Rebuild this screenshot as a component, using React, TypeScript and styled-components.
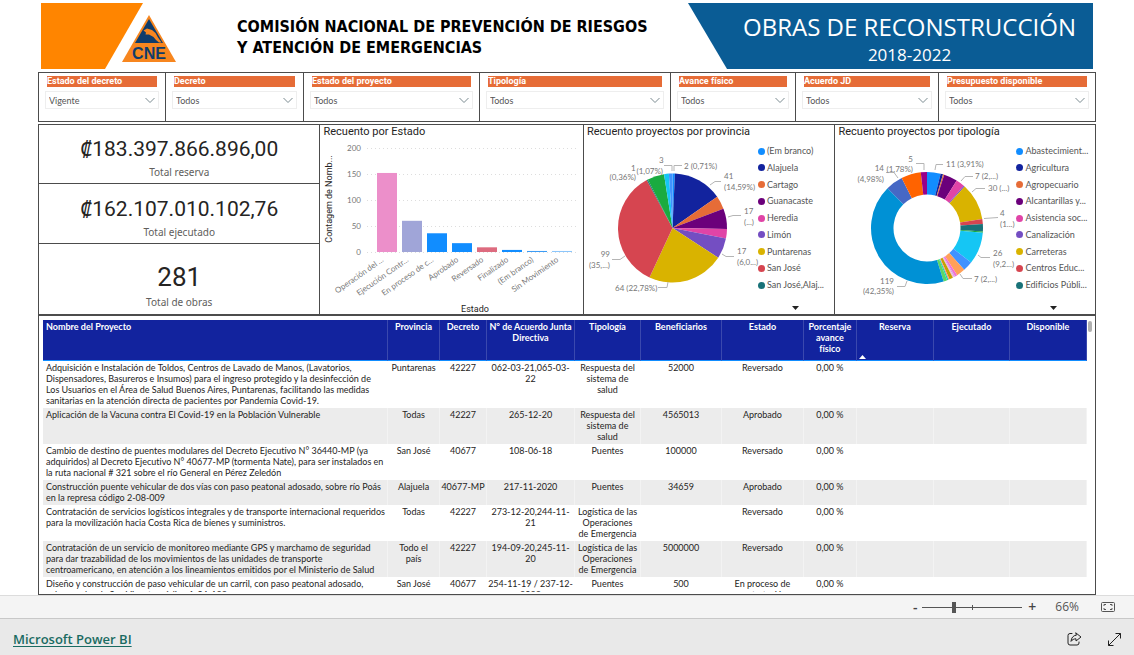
import React from 'react';
import styled, { createGlobalStyle } from 'styled-components';

const text = 'Lato, "Noto Sans", sans-serif';
const din = 'Roboto, "Noto Sans", sans-serif';
const ui = '"Open Sans", "Noto Sans", sans-serif';
const line = '#4c4c4c';

const GlobalStyle = createGlobalStyle`
  * { box-sizing: border-box; }
  body { margin: 0; background: #fff; color: #252423; font-family: ${text}; font-feature-settings: "liga" 0, "calt" 0, "ordn" 0; }
  button, select, input { font-family: inherit; }
`;

const Page = styled.div`
  min-height: 100vh;
  display: flex;
  flex-direction: column;
`;

const Report = styled.main`
  flex: 1;
  display: flex;
  flex-direction: column;
  padding: 0 38px;
`;

/* ---------- header ---------- */

const Header = styled.header`
  display: flex;
  align-items: flex-start;
  padding: 3px;
`;

const OrangeShape = styled.div`
  width: 102px;
  height: 66px;
  background: #ff8500;
  clip-path: polygon(0 0, 100% 0, 64px 100%, 0 100%);
`;

const Logo = styled.svg`
  width: 54px;
  height: 48px;
  margin: 12px 0 0 -21px;
`;

const Title = styled.h1`
  margin: 13px 0 0 61px;
  font: bold 16px/21px "DejaVu Sans Condensed", "DejaVu Sans", sans-serif;
  color: #000;
`;

const Banner = styled.div`
  margin-left: auto;
  width: 405px;
  height: 66px;
  padding: 7px 0 0 38px;
  background: #0a5c95;
  color: #fff;
  text-align: center;
  font-family: ${ui};
  clip-path: polygon(0 0, 100% 0, 100% 100%, 39px 100%);
`;

const BannerTitle = styled.h2`
  margin: 0;
  font-size: 24px;
  font-weight: 400;
  line-height: 34px;
`;

const BannerYears = styled.p`
  margin: 0;
  font-size: 17px;
  line-height: 22px;
`;

/* ---------- slicers ---------- */

const Slicers = styled.section`
  display: grid;
  grid-template-columns: 127fr 138fr 176fr 191fr 125fr 143fr 157fr;
  height: 50px;
  border: 1px solid ${line};
  border-left: 0;
`;

const Slicer = styled.div`
  padding: 3px 6px 0;
  border-left: 1px solid ${line};
`;

const SlicerLabel = styled.label`
  display: block;
  margin: 0 2px 4px;
  background: #e66c37;
  color: #fff;
  font: bold 9px/11px ${din};
`;

const SelectBox = styled.div`
  position: relative;
`;

const Select = styled.select`
  appearance: none;
  display: block;
  width: 100%;
  height: 18px;
  padding: 0 16px 0 3px;
  border: 1px solid #eee;
  border-radius: 0;
  background: #fff;
  color: #555;
  font-size: 9px;
`;

const Chevron = styled.svg`
  position: absolute;
  right: 4px;
  top: 6px;
  width: 10px;
  height: 7px;
  pointer-events: none;
`;

/* ---------- panels ---------- */

const Panels = styled.section`
  display: grid;
  grid-template-columns: 281fr 264fr 252fr 261fr;
  margin-top: 2px;
  height: 192px;
  border: 1px solid ${line};
  border-bottom-width: 2px;
`;

const Kpis = styled.div`
  display: grid;
  grid-template-rows: 59px 60px 1fr;
`;

const Kpi = styled.div`
  display: flex;
  flex-direction: column;
  align-items: center;
  justify-content: center;
  padding-top: 8px;
  border-bottom: 1px solid ${line};
  &:last-child { border-bottom: 0; padding-top: 13px; }
`;

const KpiValue = styled.div<{ $large?: boolean }>`
  font: 400 ${(p) => (p.$large ? 26 : 21)}px/${(p) => (p.$large ? 32 : 28)}px ${din};
  color: #252423;
`;

const KpiLabel = styled.div`
  font: 10px/18px "Noto Sans", sans-serif;
  color: #605e5c;
`;

const Panel = styled.div`
  border-left: 1px solid ${line};
  padding: 1px 3px 0;
  overflow: hidden;
`;

const PanelTitle = styled.h3`
  margin: 0;
  font: 400 11px/12px ${din};
  white-space: nowrap;
`;

const ChartRow = styled.div`
  display: flex;
  margin-left: -1px;
`;

const Chart = styled.svg`
  display: block;
  flex: none;
  overflow: visible;
  font-family: ${text};
  font-size: 8px;
  fill: #777;
`;

const Legend = styled.div`
  flex: 1;
  display: flex;
  flex-direction: column;
  align-items: flex-start;
  padding-top: 7px;
`;

const LegendList = styled.ul`
  display: flex;
  flex-direction: column;
  justify-content: space-between;
  height: 146px;
  margin: 0;
  padding: 0;
  list-style: none;
`;

const LegendItem = styled.li<{ $color: string }>`
  display: flex;
  align-items: center;
  gap: 2px;
  font-size: 9px;
  line-height: 12px;
  color: #555;
  white-space: nowrap;
  &::before {
    content: '';
    width: 7px;
    height: 7px;
    border-radius: 50%;
    background: ${(p) => p.$color};
  }
`;

const MoreButton = styled.button`
  margin: 14px 0 0 34px;
  padding: 0;
  border: 0;
  background: none;
  line-height: 0;
`;

/* ---------- table ---------- */

const TablePanel = styled.section`
  display: flex;
  align-items: flex-start;
  padding: 4px 3px 2px 4px;
  border: 1px solid ${line};
  border-top: 0;
`;

const TableView = styled.div`
  flex: 1;
  height: 272px;
  overflow: hidden;
`;

const Table = styled.table`
  width: 100%;
  table-layout: fixed;
  border-collapse: separate;
  border-spacing: 0;
  font-size: 9px;
  line-height: 11px;
`;

const Th = styled.th<{ $left?: boolean }>`
  position: relative;
  height: 41px;
  padding: 1px ${(p) => (p.$left ? 3 : 1)}px 0;
  background: #12239e;
  border-bottom: 1px solid #118dff;
  border-right: 1px solid #3a48ae;
  color: #fff;
  font-weight: 700;
  text-align: ${(p) => (p.$left ? 'left' : 'center')};
  vertical-align: top;
`;

const SortMark = styled.svg`
  position: absolute;
  left: 2px;
  bottom: 1px;
  width: 7px;
  height: 4px;
`;

const Tr = styled.tr`
  &:nth-child(even) { background: #ececec; }
`;

const Td = styled.td<{ $left?: boolean }>`
  padding: 1px ${(p) => (p.$left ? 3 : 0)}px 2px;
  text-align: ${(p) => (p.$left ? 'left' : 'center')};
  vertical-align: top;
  white-space: pre;
  border-right: 1px solid rgba(255, 255, 255, 0.4);
`;

const ScrollThumb = styled.div`
  width: 4px;
  height: 11px;
  margin: 1px 0 0 1px;
  border-radius: 2px;
  background: #b0b0b0;
`;

/* ---------- bottom bars ---------- */

const ZoomBar = styled.div`
  display: flex;
  align-items: center;
  justify-content: flex-end;
  height: 23px;
  padding-right: 18px;
  background: #f4f4f4;
  border-top: 1px solid #dcdcdc;
  font-family: ${ui};
  color: #555;
`;

const ZoomButton = styled.button`
  width: 14px;
  height: 20px;
  padding: 0;
  border: 0;
  background: none;
  color: #444;
  font-size: 14px;
  font-weight: 600;
  line-height: 20px;
`;

const ZoomRange = styled.input`
  appearance: none;
  width: 100px;
  height: 12px;
  margin: 0 3px 0 0;
  background:
    linear-gradient(#555, #555) 50px 4px / 1px 5px no-repeat,
    linear-gradient(#555, #555) 0 6px / 100% 1px no-repeat;
  &::-webkit-slider-thumb {
    appearance: none;
    width: 4px;
    height: 11px;
    background: #555;
  }
`;

const ZoomValue = styled.output`
  margin: 0 22px 0 16px;
  font-size: 12px;
  line-height: 20px;
`;

const IconButton = styled.button`
  display: flex;
  padding: 0;
  border: 0;
  background: none;
  color: inherit;
`;

const Footer = styled.footer`
  display: flex;
  align-items: center;
  gap: 26px;
  height: 37px;
  padding: 4px 13px 0;
  background: #e9e9e9;
  border-top: 1px solid #c8c8c8;
  color: #222;
`;

const FooterLink = styled.a`
  margin-right: auto;
  color: #1a6b62;
  font: 600 13px/20px ${ui};
  text-underline-offset: 2px;
`;

/* ---------- data ---------- */

const slicers = [
  ['Estado del decreto', 'Vigente'],
  ['Decreto', 'Todos'],
  ['Estado del proyecto', 'Todos'],
  ['Tipología', 'Todos'],
  ['Avance físico', 'Todos'],
  ['Acuerdo JD', 'Todos'],
  ['Presupuesto disponible', 'Todos'],
];

const bars: [string, number, string][] = [
  ['Operación del ...', 152, '#ec8fca'],
  ['Ejecución Contr...', 60, '#a0a5d8'],
  ['En proceso de c...', 36, '#118dff'],
  ['Aprobado', 17, '#118dff'],
  ['Reversado', 9, '#dd6b7f'],
  ['Finalizado', 4, '#118dff'],
  ['(Em branco)', 2, '#3c9cf5'],
  ['Sin Movimiento', 2, '#8cc6fb'],
];

type Slice = [number, string];

const provinces: Slice[] = [
  [2, '#118dff'], [41, '#12239e'], [11, '#e66c37'], [17, '#6b007b'], [8, '#e044a7'],
  [17, '#744ec2'], [64, '#d9b300'], [99, '#d64550'], [1, '#197278'], [14, '#1aab40'],
  [4, '#15c6f4'], [3, '#4092ff'],
];

const typologies: Slice[] = [
  [11, '#118dff'], [2, '#12239e'], [1, '#e66c37'], [11, '#6b007b'], [7, '#e044a7'],
  [1, '#744ec2'], [30, '#d9b300'], [4, '#d64550'], [6, '#197278'], [1, '#1aab40'],
  [26, '#15c6f4'], [8, '#4092ff'], [7, '#ffa058'], [2, '#f472d0'], [1, '#c9a0e8'],
  [1, '#f9b0dd'], [3, '#c4a200'], [1, '#ff8f80'], [1, '#00dbbc'], [3, '#5bd667'],
  [119, '#0091d5'], [14, '#4668c5'], [16, '#ff6300'], [5, '#99008a'],
];

const provinceLegend: [string, string][] = [
  ['(Em branco)', '#118dff'], ['Alajuela', '#12239e'], ['Cartago', '#e66c37'],
  ['Guanacaste', '#6b007b'], ['Heredia', '#e044a7'], ['Limón', '#744ec2'],
  ['Puntarenas', '#d9b300'], ['San José', '#d64550'], ['San José,Alaj...', '#197278'],
];

const typologyLegend: [string, string][] = [
  ['Abastecimient...', '#118dff'], ['Agricultura', '#12239e'], ['Agropecuario', '#e66c37'],
  ['Alcantarillas y...', '#6b007b'], ['Asistencia soc...', '#e044a7'], ['Canalización', '#744ec2'],
  ['Carreteras', '#d9b300'], ['Centros Educ...', '#d64550'], ['Edificios Públi...', '#197278'],
];

type Callout = [number, number, string, boolean?];

const provinceCallouts: Callout[] = [
  [73, 25, '3'], [77, 36, '(1,07%)', true], [98, 31, '2 (0,71%)'], [45, 33, '1'],
  [50, 42, '(0,36%)', true], [138, 41, '41'], [138, 52, '(14,59%)'], [158, 76, '17'],
  [158, 87, '(...)'], [151, 116, '17'], [151, 127, '(6,0...)'], [24, 119, '99', true],
  [24, 130, '(35,...)', true], [29, 153, '64 (22,78%)'],
];
const provinceLeaders =
  'M78 27.5H86V33M88 33V27.5H96M124 47L129 43.5H135M142 79L147 77.5H155M136 116L140 118.5H148M26 121.5H34L39 118M72 149.5H81L82 144';

const typologyCallouts: Callout[] = [
  [76, 24, '5', true], [76, 34, '(1,78%)', true], [47, 33, '14', true], [47, 44, '(4,98%)', true],
  [109, 29, '11 (3,91%)'], [138, 41, '7 (2,...)'], [151, 53, '30 (...)'], [163, 78, '4'],
  [163, 89, '(1...)'], [156, 118, '26'], [156, 129, '(9,2...)'], [137, 144, '7 (2,...)'],
  [57, 146, '119', true], [57, 156, '(42,35%)', true],
];
const typologyLeaders =
  'M79 25.5H87V32M49 34.5H57L61 40M98 32L99 26.5H106M124 43L128 38.5H136M135 54L139 50.5H148M147 80.5L161 79.5M141 117L144 119.5H153M123 136L126 140.5H135M60 148.5H68L70 143';

const columns: [string, number][] = [
  ['Nombre del Proyecto', 345], ['Provincia', 52], ['Decreto', 47], ['N° de Acuerdo Junta Directiva', 88],
  ['Tipología', 66], ['Beneficiarios', 81], ['Estado', 82], ['Porcentaje avance físico', 53],
  ['Reserva', 77], ['Ejecutado', 76], ['Disponible', 77],
];

const rows: string[][] = [
  ['Adquisición e Instalación de Toldos, Centros de Lavado de Manos, (Lavatorios,\nDispensadores, Basureros e Insumos) para el ingreso protegido y la desinfección de\nLos Usuarios en el Área de Salud Buenos Aires, Puntarenas, facilitando las medidas\nsanitarias en la atención directa de pacientes por Pandemia Covid-19.', 'Puntarenas', '42227', '062-03-21,065-03-\n22', 'Respuesta del\nsistema de\nsalud', '52000', 'Reversado'],
  ['Aplicación de la Vacuna contra El Covid-19 en la Población Vulnerable', 'Todas', '42227', '265-12-20', 'Respuesta del\nsistema de\nsalud', '4565013', 'Aprobado'],
  ['Cambio de destino de puentes modulares del Decreto Ejecutivo N° 36440-MP (ya\nadquiridos) al Decreto Ejecutivo N° 40677-MP (tormenta Nate), para ser instalados en\nla ruta nacional # 321 sobre el río General en Pérez Zeledón', 'San José', '40677', '108-06-18', 'Puentes', '100000', 'Reversado'],
  ['Construcción puente vehicular de dos vías con paso peatonal adosado, sobre río Poás\nen la represa código 2-08-009', 'Alajuela', '40677-MP', '217-11-2020', 'Puentes', '34659', 'Aprobado'],
  ['Contratación de servicios logísticos integrales y de transporte internacional requeridos\npara la movilización hacia Costa Rica de bienes y suministros.', 'Todas', '42227', '273-12-20,244-11-\n21', 'Logística de las\nOperaciones\nde Emergencia', '', 'Reversado'],
  ['Contratación de un servicio de monitoreo mediante GPS y marchamo de seguridad\npara dar trazabilidad de los movimientos de las unidades de transporte\ncentroamericano, en atención a los lineamientos emitidos por el Ministerio de Salud', 'Todo el\npaís', '42227', '194-09-20,245-11-\n20', 'Logística de las\nOperaciones\nde Emergencia', '5000000', 'Reversado'],
  ['Diseño y construcción de paso vehicular de un carril, con paso peatonal adosado,\nsobre quebrada San Vicente, código 1-04-122', 'San José', '40677', '254-11-19 / 237-12-\n2022', 'Puentes', '500', 'En proceso de\ncontratación'],
];

/* ---------- charts ---------- */

function slicePaths(data: Slice[], cx: number, cy: number, outer: number, inner: number) {
  const total = data.reduce((sum, [value]) => sum + value, 0);
  let start = 0;
  return data.map(([value, color], i) => {
    const end = start + (value / total) * Math.PI * 2;
    const at = (r: number, a: number) => `${cx + r * Math.sin(a)} ${cy - r * Math.cos(a)}`;
    const large = end - start > Math.PI ? 1 : 0;
    const d =
      `M${at(outer, start)}A${outer} ${outer} 0 ${large} 1 ${at(outer, end)}` +
      `L${at(inner, end)}A${inner} ${inner} 0 ${large} 0 ${at(inner, start)}Z`;
    start = end;
    return <path key={i} d={d} fill={color} />;
  });
}

interface RoundChartProps {
  label: string;
  width: number;
  data: Slice[];
  cx: number;
  outer: number;
  inner: number;
  leaders: string;
  callouts: Callout[];
}

function RoundChart({ label, width, data, cx, outer, inner, leaders, callouts }: RoundChartProps) {
  return (
    <Chart width={width} height={174} role="img" aria-label={label}>
      {slicePaths(data, cx, 90, outer, inner)}
      <path d={leaders} fill="none" stroke="#b5b5b5" />
      {callouts.map(([x, y, value, end], i) => (
        <text key={i} x={x} y={y} textAnchor={end ? 'end' : 'start'}>{value}</text>
      ))}
    </Chart>
  );
}

function BarChart() {
  const base = 114;
  return (
    <Chart width={258} height={176} role="img" aria-label="Recuento por Estado">
      {[0, 50, 100, 150, 200].map((tick) => {
        const y = base - tick * 0.52;
        return (
          <g key={tick}>
            <line x1={44} x2={256} y1={y + 0.5} y2={y + 0.5} stroke="#ddd" strokeDasharray="1 3" />
            <text x={38} y={y + 3} textAnchor="end">{tick}</text>
          </g>
        );
      })}
      {bars.map(([name, value, color], i) => {
        const x = 54 + i * 25;
        const height = Math.max(1, value * 0.52);
        return (
          <g key={name}>
            <rect x={x} y={base - height} width={20} height={height} fill={color} />
            <text transform={`translate(${x + 7} 123) rotate(-35)`} textAnchor="end">{name}</text>
          </g>
        );
      })}
      <text transform="translate(9 61) rotate(-90)" textAnchor="middle" fontFamily={din} fontSize={9} fill="#252423">
        Contagem de Nomb...
      </text>
      <text x={152} y={174} textAnchor="middle" fontFamily={din} fontSize={9} fill="#252423">Estado</text>
    </Chart>
  );
}

function ChartLegend({ items }: { items: [string, string][] }) {
  return (
    <Legend>
      <LegendList>
        {items.map(([name, color]) => (
          <LegendItem key={name} $color={color}>{name}</LegendItem>
        ))}
      </LegendList>
      <MoreButton type="button" aria-label="Más elementos">
        <svg width="7" height="4"><path d="M0 0H7L3.5 4Z" fill="#222" /></svg>
      </MoreButton>
    </Legend>
  );
}

export default function App() {
  return (
    <Page>
      <GlobalStyle />
      <Report>
        <Header>
          <OrangeShape />
          <Logo viewBox="0 0 54 48" role="img" aria-label="CNE">
            <path d="M27 0L54 47H0Z" fill="#f7861f" />
            <path d="M27 4L41 28H13Z" fill="#0f3c6b" />
            <path d="M21.5 15.5L25 13.5L30 15L33.5 18L36 22.5L39.5 27.5L37 27.5L34 25L31.5 22L27 19.5L23.5 19.5L24 17.5Z" fill="#f7861f" />
            <text x="27" y="44" textAnchor="middle" fontFamily="Liberation Sans, sans-serif" fontWeight="bold" fontSize="16" fill="#0f3c6b">CNE</text>
          </Logo>
          <Title>
            COMISIÓN NACIONAL DE PREVENCIÓN DE RIESGOS
            <br />Y ATENCIÓN DE EMERGENCIAS
          </Title>
          <Banner>
            <BannerTitle>OBRAS DE RECONSTRUCCIÓN</BannerTitle>
            <BannerYears>2018-2022</BannerYears>
          </Banner>
        </Header>

        <Slicers>
          {slicers.map(([name, value], i) => (
            <Slicer key={name}>
              <SlicerLabel htmlFor={`slicer-${i}`}>{name}</SlicerLabel>
              <SelectBox>
                <Select id={`slicer-${i}`} defaultValue={value}>
                  <option>{value}</option>
                </Select>
                <Chevron viewBox="0 0 10 7">
                  <path d="M0.5 1L5 5.5L9.5 1" fill="none" stroke="#7a8a90" />
                </Chevron>
              </SelectBox>
            </Slicer>
          ))}
        </Slicers>

        <Panels>
          <Kpis>
            <Kpi>
              <KpiValue>₡183.397.866.896,00</KpiValue>
              <KpiLabel>Total reserva</KpiLabel>
            </Kpi>
            <Kpi>
              <KpiValue>₡162.107.010.102,76</KpiValue>
              <KpiLabel>Total ejecutado</KpiLabel>
            </Kpi>
            <Kpi>
              <KpiValue $large>281</KpiValue>
              <KpiLabel>Total de obras</KpiLabel>
            </Kpi>
          </Kpis>
          <Panel>
            <PanelTitle>Recuento por Estado</PanelTitle>
            <BarChart />
          </Panel>
          <Panel>
            <PanelTitle>Recuento proyectos por provincia</PanelTitle>
            <ChartRow>
              <RoundChart label="Recuento proyectos por provincia" width={172} data={provinces} cx={86.5}
                outer={54.5} inner={0} leaders={provinceLeaders} callouts={provinceCallouts} />
              <ChartLegend items={provinceLegend} />
            </ChartRow>
          </Panel>
          <Panel>
            <PanelTitle>Recuento proyectos por tipología</PanelTitle>
            <ChartRow>
              <RoundChart label="Recuento proyectos por tipología" width={179} data={typologies} cx={90}
                outer={56} inner={33.5} leaders={typologyLeaders} callouts={typologyCallouts} />
              <ChartLegend items={typologyLegend} />
            </ChartRow>
          </Panel>
        </Panels>

        <TablePanel>
          <TableView>
            <Table>
              <colgroup>
                {columns.map(([name, width]) => (
                  <col key={name} style={{ width: `${(width / 1044) * 100}%` }} />
                ))}
              </colgroup>
              <thead>
                <tr>
                  {columns.map(([name], i) => (
                    <Th key={name} $left={i === 0}>
                      {name}
                      {name === 'Reserva' && (
                        <SortMark viewBox="0 0 7 4"><path d="M0 4H7L3.5 0Z" fill="#fff" /></SortMark>
                      )}
                    </Th>
                  ))}
                </tr>
              </thead>
              <tbody>
                {rows.map((cells) => (
                  <Tr key={cells[0]}>
                    {[...cells, '0,00 %', '', '', ''].map((cell, i) => (
                      <Td key={i} $left={i === 0}>{cell}</Td>
                    ))}
                  </Tr>
                ))}
              </tbody>
            </Table>
          </TableView>
          <ScrollThumb />
        </TablePanel>
      </Report>

      <ZoomBar>
        <ZoomButton type="button" aria-label="Alejar">-</ZoomButton>
        <ZoomRange type="range" min={0} max={100} defaultValue={31} aria-label="Zoom" />
        <ZoomButton type="button" aria-label="Acercar">+</ZoomButton>
        <ZoomValue>66%</ZoomValue>
        <IconButton type="button" aria-label="Ajustar a la página">
          <svg width="15" height="11" fill="none" stroke="#555">
            <rect x="0.5" y="0.5" width="13" height="9" rx="1" />
            <path d="M3 4V2.5H5M9 2.5H11V4M11 6V7.5H9M5 7.5H3V6" />
          </svg>
        </IconButton>
      </ZoomBar>
      <Footer>
        <FooterLink href="#powerbi">Microsoft Power BI</FooterLink>
        <IconButton type="button" aria-label="Compartir">
          <svg width="15" height="14" fill="none" stroke="currentColor" strokeLinejoin="round" strokeLinecap="round">
            <path d="M5 1.5H3A2 2 0 0 0 1 3.5V11A2 2 0 0 0 3 13H10A2 2 0 0 0 12 11V10" />
            <path d="M9 1L14 5L9 9V6.8C7 6.8 5.2 7.6 4 9.4C4.3 5.8 6.2 3.4 9 3.2Z" />
          </svg>
        </IconButton>
        <IconButton type="button" aria-label="Pantalla completa">
          <svg width="13" height="13" fill="none" stroke="currentColor">
            <path d="M7.5 0.5H12.5V5.5M12.5 0.5L0.5 12.5M0.5 7.5V12.5H5.5" />
          </svg>
        </IconButton>
      </Footer>
    </Page>
  );
}
